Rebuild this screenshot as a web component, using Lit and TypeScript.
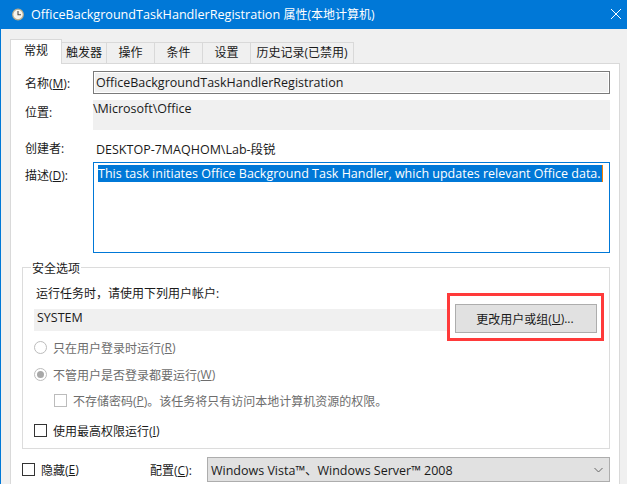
import { LitElement, html, css } from "lit";
import { customElement } from "lit/decorators.js";

@customElement("app-root")
export class AppRoot extends LitElement {
  static styles = css`
    :host { display: block; width: 627px; height: 484px; overflow: hidden; }
    * { box-sizing: border-box; }
    .win { width: 627px; height: 484px; background: #f0f0f0; border-left: 1px solid #0078d7; overflow: hidden;
      font-family: "Open Sans", "Noto Sans CJK SC", sans-serif; font-size: 12px; color: #1a1a1a; }
    .title { height: 29px; margin-left: -1px; background: #0078d7; color: #fff; display: flex; align-items: center; padding: 0 6px 1px 12px; font-size: 12.6px; }
    .title svg.clock { margin-right: 7px; flex: none; }
    .title .t { flex: 1; white-space: nowrap; }
    .title .cn { font-size: 12px; }
    .tabs { display: flex; align-items: flex-end; height: 34px; padding-left: 9px; position: relative; }
    .tab { height: 21px; border: 1px solid #d9d9d9; border-bottom: 0; border-left: 0; background: #f0f0f0; display: flex; align-items: center; justify-content: center; white-space: nowrap; padding-bottom: 2px; }
    .tab.on { height: 25px; background: #fff; border-left: 1px solid #d9d9d9; margin-bottom: -1px; position: relative; z-index: 1; padding-bottom: 5px; }
    .panel { margin-left: 9px; width: 610px; height: 430px; background: #fff; border: 1px solid #d9d9d9; padding: 7px 9px 0 11px; }
    .row { display: flex; padding-left: 3px; }
    .lab { width: 68px; flex: none; white-space: nowrap; }
    .name { height: 23px; align-items: center; }
    .field { flex: 1; height: 23px; border: 1px solid #7a7a7a; box-shadow: inset 0 0 0 1px #fff; background: #f0f0f0; padding-left: 2px; display: flex; align-items: center; font-size: 12.5px; }
    .loc { height: 30px; margin-top: 6px; }
    .loc .lab { padding-top: 3px; }
    .locbox { flex: 1; background: #f0f0f0; font-size: 12.5px; line-height: 17px; }
    .creator { height: 32px; align-items: center; padding-top: 4px; }
    .creator .v { padding-left: 3px; font-size: 12.5px; white-space: nowrap; }
    .desc { height: 91px; }
    .desc .lab { padding-top: 4px; }
    .area { flex: 1; border: 1px solid #0078d7; background: #fff; padding: 2px 4px; font-size: 12.5px; }
    .sel { display: block; width: 505px; height: 17px; line-height: 17px; background: #0078d7; color: #fff; white-space: nowrap; border-right: 1px solid #f77f00; }
    .group { position: relative; height: 182px; margin-top: 14px; border: 1px solid #dcdcdc; padding: 18px 0 0 11px; }
    .legend { position: absolute; left: 8px; top: -8px; padding: 0 1px; background: #fff; line-height: 17px; }
    .runas { height: 16px; line-height: 16px; padding-left: 2px; }
    .acct { display: flex; height: 29px; margin-top: 2px; }
    .sys { width: 414px; height: 22px; margin-top: 5px; background: #f0f0f0; padding-left: 3px; font-size: 12.5px; line-height: 18px; }
    .btnwrap { position: relative; margin-left: 7px; }
    .btn { width: 142px; height: 29px; background: #e1e1e1; border: 1px solid #adadad; display: flex; align-items: center; justify-content: center; white-space: nowrap; padding-right: 2px; }
    .mark { position: absolute; left: -8px; right: -7px; top: -11px; bottom: -8px; border: 3px solid #ff3a3a; pointer-events: none; }
    .opt { display: flex; align-items: center; white-space: nowrap; }
    .opt.dis { color: #6d6d6d; }
    .radio { width: 13px; height: 13px; border-radius: 50%; border: 1px solid #bcbcbc; background: #fff; margin-right: 6px; flex: none; display: flex; align-items: center; justify-content: center; }
    .radio i { width: 7px; height: 7px; border-radius: 50%; background: #a8a8a8; display: block; }
    .cb { width: 13px; height: 13px; border: 1px solid #333; background: #fff; margin-right: 6px; flex: none; }
    .cb.dis { border-color: #bcbcbc; }
    .r1 { height: 29px; }
    .r2 { height: 25px; }
    .r3 { height: 27px; padding-left: 20px; }
    .r4 { height: 33px; }
    .bottom { display: flex; align-items: center; height: 25px; margin-top: 8px; }
    .bottom .opt { width: 128px; }
    .cfg { width: 57px; white-space: nowrap; }
    .select { flex: 1; height: 25px; background: #e1e1e1; border: 1px solid #adadad; display: flex; align-items: center; padding: 0 6px 0 3px; font-size: 12.5px; justify-content: space-between; }
  `;

  render() {
    return html`
      <div class="win">
        <div class="title">
          <svg class="clock" width="12" height="13" viewBox="0 0 12 13">
            <circle cx="6" cy="6.5" r="5.3" fill="#f6f4ec" stroke="#b9ad8e" stroke-width="1.2"/>
            <path d="M6 3v3.7h3" fill="none" stroke="#4a4a4a" stroke-width="1.1"/>
          </svg>
          <span class="t">OfficeBackgroundTaskHandlerRegistration <span class="cn">属性(本地计算机)</span></span>
          <svg width="10" height="10" viewBox="0 0 10 10"><path d="M0 0l10 10M10 0L0 10" stroke="#fff" stroke-width="1"/></svg>
        </div>
        <div class="tabs">
          <div class="tab on" style="width:52px">常规</div>
          <div class="tab" style="width:45px">触发器</div>
          <div class="tab" style="width:48px">操作</div>
          <div class="tab" style="width:48px">条件</div>
          <div class="tab" style="width:48px">设置</div>
          <div class="tab" style="width:103px">历史记录(已禁用)</div>
        </div>
        <div class="panel">
          <div class="row name"><div class="lab">名称(<u>M</u>):</div><div class="field">OfficeBackgroundTaskHandlerRegistration</div></div>
          <div class="row loc"><div class="lab">位置:</div><div class="locbox">\\Microsoft\\Office</div></div>
          <div class="row creator"><div class="lab">创建者:</div><div class="v">DESKTOP-7MAQHOM\\Lab-段锐</div></div>
          <div class="row desc"><div class="lab">描述(<u>D</u>):</div>
            <div class="area"><span class="sel">This task initiates Office Background Task Handler, which updates relevant Office data.</span></div>
          </div>
          <div class="group">
            <div class="legend">安全选项</div>
            <div class="runas">运行任务时，请使用下列用户帐户:</div>
            <div class="acct">
              <div class="sys">SYSTEM</div>
              <div class="btnwrap"><div class="btn">更改用户或组(<u>U</u>)...</div><div class="mark"></div></div>
            </div>
            <div class="opt dis r1"><span class="radio"></span>只在用户登录时运行(<u>R</u>)</div>
            <div class="opt dis r2"><span class="radio"><i></i></span>不管用户是否登录都要运行(<u>W</u>)</div>
            <div class="opt dis r3"><span class="cb dis"></span>不存储密码(<u>P</u>)。该任务将只有访问本地计算机资源的权限。</div>
            <div class="opt r4"><span class="cb"></span>使用最高权限运行(<u>I</u>)</div>
          </div>
          <div class="bottom">
            <div class="opt"><span class="cb"></span>隐藏(<u>E</u>)</div>
            <div class="cfg">配置(<u>C</u>):</div>
            <div class="select"><span>Windows Vista™、Windows Server™ 2008</span>
              <svg width="9" height="6" viewBox="0 0 9 6"><path d="M.5 1l4 4 4-4" fill="none" stroke="#666"/></svg>
            </div>
          </div>
        </div>
      </div>
    `;
  }
}
